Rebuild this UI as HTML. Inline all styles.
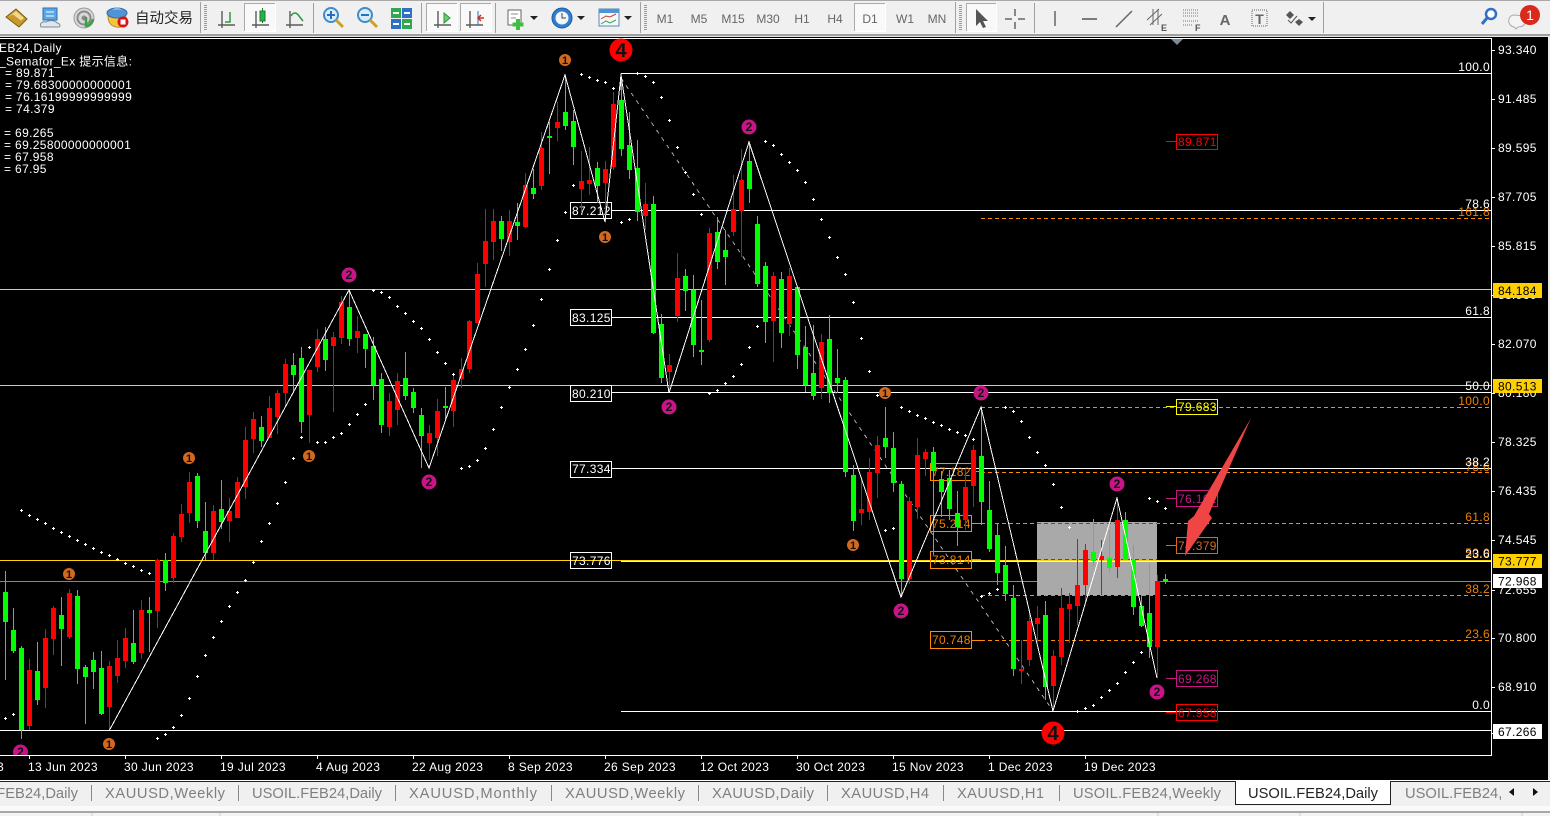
<!DOCTYPE html>
<html><head><meta charset="utf-8"><title>USOIL.FEB24,Daily</title>
<style>
html,body{margin:0;padding:0;background:#000;width:1550px;height:816px;overflow:hidden}
svg{display:block}
text{font-family:"Liberation Sans","Noto Sans CJK SC",sans-serif;font-size:12px;letter-spacing:.35px}
.tb{font-size:12px;fill:#666;text-anchor:middle;letter-spacing:0}
.t{font-size:14.7px;fill:#7f7f7f;letter-spacing:0}
.sg{font-size:11px;font-weight:bold;text-anchor:middle;fill:#111;letter-spacing:0}
</style></head><body>
<svg width="1550" height="816" viewBox="0 0 1550 816" xmlns="http://www.w3.org/2000/svg">
<defs>
<g id="ax" fill="none" stroke="#5a5a5a" stroke-width="1.4"><path d="M-8 7h17M-4-7v17"/></g>
<clipPath id="cl"><rect x="0" y="739" width="40" height="16"/></clipPath>
</defs>
<!-- toolbar -->
<rect width="1550" height="34" fill="#f0f0f0"/>
<rect width="1550" height="1" fill="#a8a8a8"/>
<rect y="34" width="1550" height="2" fill="#a0a0a0"/>
<rect y="36" width="1550" height="1" fill="#e8e8e8"/>
<g fill="#a0a0a0"><rect x="200" y="2" width="1" height="31"/><rect x="313" y="3" width="1" height="30"/><rect x="421" y="3" width="1" height="30"/><rect x="495" y="3" width="1" height="30"/><rect x="640" y="2" width="1" height="31"/><rect x="955" y="2" width="1" height="31"/><rect x="1034" y="3" width="1" height="30"/><rect x="1323" y="2" width="1" height="31"/></g>
<g stroke="#999" stroke-width="3" stroke-dasharray="1 1"><path d="M205.500 5V31M645.500 5V31M960.500 5V31"/></g>
<!-- selected boxes -->
<g fill="#f9f9f9" stroke="#fff"><rect x="244.500" y="3.500" width="31" height="28"/><rect x="426.500" y="3.500" width="31" height="28"/><rect x="460.500" y="3.500" width="31" height="28"/><rect x="854.500" y="3.500" width="31" height="28"/><rect x="966.500" y="3.500" width="30" height="28"/></g>
<g fill="none" stroke="#aaa"><path d="M244.500 31V3.500H275M426.500 31V3.500H457M460.500 31V3.500H491M854.500 31V3.500H885M966.500 31V3.500H996"/></g>
<!-- icon 1 folder -->
<path d="M6 17L16 9 27 19 19 27z" fill="#c9982a" stroke="#7a5c10"/><path d="M8.500 16.500l7.500-5.500 8 7-3 2.500-8-6z" fill="#f0d890"/>
<!-- icon 2 -->
<rect x="43" y="8" width="14" height="12" fill="#5aa7e6" stroke="#2a6fb5"/><path d="M46 12h8M46 16h8" stroke="#fff"/>
<path d="M41 27c-2-4 2-6 5-5 3-2 9-2 11 1 3 0 4 4 2 4z" fill="#dfe6ee" stroke="#7d8b99"/>
<!-- icon 3 -->
<circle cx="84" cy="18" r="10" fill="#d8d8d8" stroke="#999"/><circle cx="84" cy="18" r="6.500" fill="none" stroke="#8a8a8a" stroke-width="2"/><circle cx="84" cy="18" r="2.500" fill="#8a8a8a"/><path d="M86 17v9c3 0 6-3 7-7" fill="none" stroke="#3aa34a" stroke-width="2.500"/>
<!-- icon 4 -->
<path d="M108 16c0 9 6 12 13 11l6-8-3-5z" fill="#f5c63c" stroke="#b98b1a"/><ellipse cx="117" cy="13" rx="10" ry="5" fill="#4f94d4" stroke="#2d6aa5"/><path d="M112 10c2-3 8-3 10 0" fill="#7eb6e6"/>
<circle cx="123" cy="22" r="5.500" fill="#e01010"/><rect x="120.500" y="19.500" width="5" height="5" fill="#fff"/>
<text x="135" y="23" style="font-size:14.500px;fill:#222;letter-spacing:0">自动交易</text>
<!-- chart type icons -->
<use href="#ax" x="226" y="18"/><path d="M230 12v10h-5" fill="none" stroke="#2a9a3a" stroke-width="1.500"/>
<use href="#ax" x="260" y="18"/><path d="M262.500 8v15" stroke="#1f7a2e"/><rect x="260" y="11" width="5" height="10" fill="#22b14c" stroke="#1f7a2e"/>
<use href="#ax" x="294" y="18"/><path d="M291 16c3-5 6-3 8 0l4 5" fill="none" stroke="#2a9a3a" stroke-width="1.500"/>
<!-- zoom -->
<circle cx="331" cy="15" r="7" fill="#d9ecfa" stroke="#3f8ccc" stroke-width="2"/><path d="M336 20l7 7" stroke="#c9a227" stroke-width="3"/><path d="M327 15h8M331 11v8" stroke="#2a70b5" stroke-width="2"/>
<circle cx="365" cy="15" r="7" fill="#d9ecfa" stroke="#3f8ccc" stroke-width="2"/><path d="M370 20l7 7" stroke="#c9a227" stroke-width="3"/><path d="M361 15h8" stroke="#2a70b5" stroke-width="2"/>
<!-- tile -->
<rect x="391" y="8" width="10" height="10" fill="#2fa84f"/><rect x="402" y="8" width="10" height="10" fill="#2f6fc4"/><rect x="391" y="19" width="10" height="10" fill="#2f6fc4"/><rect x="402" y="19" width="10" height="10" fill="#2fa84f"/>
<path d="M393 13h6M404 13h6M393 24h6M404 24h6" stroke="#fff" stroke-width="2"/>
<use href="#ax" x="442" y="18"/><path d="M444 13l6 5-6 5z" fill="#6ecb6e" stroke="#2a9a3a"/>
<use href="#ax" x="474" y="18"/><path d="M478 11v14" stroke="#2a70b5"/><path d="M484 18h-5M481 15l-3 3 3 3" fill="none" stroke="#d03020" stroke-width="1.500"/>
<!-- new chart -->
<rect x="508" y="10" width="13" height="15" fill="#fff" stroke="#666"/><path d="M511 14h7M511 18h5" stroke="#888"/><path d="M518 19v11M512.500 24.500h11" stroke="#3fbf3f" stroke-width="4"/>
<path d="M530 16h8l-4 4z" fill="#222"/>
<circle cx="562" cy="18" r="10" fill="#2f7fd0" stroke="#1b5a9e"/><circle cx="562" cy="18" r="6.500" fill="#f2f6fa"/><path d="M562 13v5h4" fill="none" stroke="#444"/>
<path d="M577 16h8l-4 4z" fill="#222"/>
<rect x="599" y="9" width="20" height="17" fill="#f5f8fb" stroke="#5a88b5"/><rect x="599" y="9" width="20" height="4" fill="#4f94d4"/><path d="M601 19l5-3 4 1 6-3" fill="none" stroke="#b8402a"/><path d="M601 24l5-3 4 2 6-3" fill="none" stroke="#3aa34a"/>
<path d="M624 16h8l-4 4z" fill="#222"/>
<!-- timeframes -->
<text class="tb" x="665" y="23">M1</text><text class="tb" x="699" y="23">M5</text><text class="tb" x="733" y="23">M15</text><text class="tb" x="768" y="23">M30</text><text class="tb" x="802" y="23">H1</text><text class="tb" x="835" y="23">H4</text><text class="tb" x="870" y="23">D1</text><text class="tb" x="905" y="23">W1</text><text class="tb" x="937" y="23">MN</text>
<!-- tools -->
<path d="M976 9l0 17 4-4 3 6 3-1-3-6 5 0z" fill="#555"/>
<path d="M1005 19h7M1018 19h7M1015 9v7M1015 22v7" stroke="#666" stroke-width="1.500"/>
<path d="M1055 11v15" stroke="#666" stroke-width="1.500"/><path d="M1082 19h15" stroke="#555" stroke-width="1.500"/><path d="M1116 27l16-16" stroke="#666" stroke-width="1.500"/>
<path d="M1147 20l12-11M1150 25l12-11M1153 9v16M1158 9v16" stroke="#666" fill="none"/><text x="1161" y="31" style="font-size:9px;font-weight:bold;fill:#555;letter-spacing:0">E</text>
<path d="M1183 10h16M1183 13h16M1183 16h16M1183 21h16M1183 25h9" stroke="#777" stroke-dasharray="1 1"/><text x="1195" y="31" style="font-size:9px;font-weight:bold;fill:#555;letter-spacing:0">F</text>
<text x="1225" y="25" style="font-size:15px;font-weight:bold;fill:#666;text-anchor:middle;letter-spacing:0">A</text>
<rect x="1252" y="10" width="15" height="16" fill="none" stroke="#666" stroke-dasharray="1 1"/><text x="1259.500" y="24" style="font-size:14px;font-weight:bold;fill:#666;text-anchor:middle;letter-spacing:0">T</text>
<path d="M1290 11l4 4-4 4-4-4zM1299 19l4 3-4 4-4-4z" fill="#555"/><path d="M1288 20l3 3 6-7" fill="none" stroke="#555"/>
<path d="M1308 17h8l-4 4z" fill="#222"/>
<!-- search & chat -->
<circle cx="1491" cy="14" r="5" fill="#fff" stroke="#2f6fc4" stroke-width="2.500"/><path d="M1487 18l-5 6" stroke="#2f6fc4" stroke-width="3"/>
<path d="M1514 15c-6 0-8 10 0 12l2 2 2-2c7 0 10-6 6-11z" fill="#f4f4f4" stroke="#aaa"/>
<circle cx="1530" cy="15" r="10" fill="#d92a1c"/><text x="1530" y="20" style="font-size:14px;fill:#fff;text-anchor:middle;letter-spacing:0">1</text>

<!-- right margin -->
<rect x="1548" y="37" width="2" height="743" fill="#eee"/>

<!-- chart lines -->
<g shape-rendering="crispEdges" fill="none">
<path d="M1037 522h120v73h-120z" fill="#a9a9a9"/>
<path d="M0 581.500H1037M1157 581.500H1491" stroke="#7b8a99"/>
<path d="M0 289.500H1491M0 385.500H1491M0 560.500H1491" stroke="#ffd400"/>
<path d="M621 73.500H1491M621 73.500V90M611 210.500H1491M611 317.500H1491M611 392.500H1491M611 468.500H1491M621 561.500H1491M621 711.500H1491M0 730.500H1491" stroke="#fff"/>
<path d="M981 218.500H1491M981 407.500H1491M981 472.500H1491M981 523.500H1491M981 595.500H1491M981 640.500H1491" stroke="#ff8c00" stroke-dasharray="4 3"/>
<path d="M1037 523.500H1157M1037 559.500H1157" stroke="#5b3b9a" stroke-dasharray="4 3"/>
<path d="M972 471.500h9M972 523.500h9M972 559.500h9M972 640.500h9M981 472v-1" stroke="#ff8c00"/>
<path d="M1166 141.500h10" stroke="#f00"/><path d="M1166 406.500h10" stroke="#ff0"/><path d="M1166 498.500h10" stroke="#c71585"/><path d="M1166 545.500h10" stroke="#d2691e"/><path d="M1166 678.500h10" stroke="#c71585"/><path d="M1166 712.500h10" stroke="#f00"/>
<path d="M621 78L1053 711" stroke="#aaa" stroke-dasharray="4 5"/>
<!-- label boxes -->
<path d="M570.500 202.500h41v16h-41zM570.500 309.500h41v16h-41zM570.500 385.500h41v16h-41zM570.500 461.500h41v16h-41zM570.500 552.500h41v16h-41z" stroke="#fff"/>
<path d="M930.500 463.500h41v17h-41zM930.500 515.500h41v16h-41zM930.500 551.500h41v17h-41zM930.500 631.500h41v17h-41z" stroke="#ff8c00"/>
<path d="M1176.500 134.500h41v15h-41zM1176.500 704.500h41v16h-41z" stroke="#f00"/>
<path d="M1176.500 399.500h41v15h-41z" stroke="#ff0"/>
<path d="M1176.500 490.500h41v16h-41zM1176.500 670.500h41v16h-41z" stroke="#c71585"/>
<path d="M1176.500 537.500h41v16h-41z" stroke="#d2691e"/>
<path d="M0 38.500H1491.500V755.500H0" stroke="#fff"/>
<path d="M1491 50.500h4M1491 99.500h4M1491 148.500h4M1491 197.500h4M1491 246.500h4M1491 295.500h4M1491 344.500h4M1491 393.500h4M1491 442.500h4M1491 491.500h4M1491 540.500h4M1491 590.500h4M1491 638.500h4M1491 687.500h4M1491 733.500h4" stroke="#fff"/>
<path d="M29.500 755v4M125.500 755v4M221.500 755v4M317.500 755v4M413.500 755v4M509.500 755v4M605.500 755v4M701.500 755v4M797.500 755v4M893.500 755v4M989.500 755v4M1085.500 755v4" stroke="#fff"/>
</g>
<path d="M1171 39h12l-6 6z" fill="#7b8a99"/>
<!-- label text -->
<g fill="#fff">
<text x="572" y="215">87.212</text><text x="572" y="322">83.125</text><text x="572" y="398">80.210</text><text x="572" y="473">77.334</text><text x="572" y="565">73.776</text>
</g>
<g fill="#ee8000"><text x="932" y="476">77.182</text><text x="932" y="528">75.214</text><text x="932" y="564">73.814</text><text x="932" y="644">70.748</text></g>
<text x="1178" y="146" fill="#f00">89.871</text><text x="1178" y="411" fill="#ff0">79.683</text><text x="1178" y="503" fill="#c71585">76.161</text><text x="1178" y="550" fill="#d2691e">74.379</text><text x="1178" y="683" fill="#c71585">69.268</text><text x="1178" y="717" fill="#f00">67.958</text>
<!-- fib level text -->
<g fill="#ee8000" text-anchor="end"><text x="1490" y="216">161.8</text><text x="1490" y="405">100.0</text><text x="1490" y="471">78.6</text><text x="1490" y="521">61.8</text><text x="1490" y="557">50.0</text><text x="1490" y="593">38.2</text><text x="1490" y="638">23.6</text></g>
<g fill="#fff" text-anchor="end"><text x="1490" y="71">100.0</text><text x="1490" y="208">78.6</text><text x="1490" y="315">61.8</text><text x="1490" y="390">50.0</text><text x="1490" y="466">38.2</text><text x="1490" y="558">23.6</text><text x="1490" y="709">0.0</text></g>

<!-- candles -->
<g fill="none" shape-rendering="crispEdges">
<path stroke="#0f0" d="M5.500 571V680M13.500 608V653M21.500 646V739M37.500 642V705M61.500 597V666M77.500 590V684M85.500 665V724M93.500 652V689M101.500 651V715M133.500 610V664M149.500 597V652M165.500 553V591M197.500 473V528M205.500 502V560M221.500 480V529M261.500 416V447M293.500 353V393M301.500 347V433M325.500 327V371M349.500 290V346M365.500 334V368M373.500 337V400M381.500 373V433M405.500 352V400M413.500 388V413M421.500 408V468M445.500 387V420M501.500 216V251M517.500 203V240M533.500 169V199M549.500 122V174M565.500 75V130M573.500 110V165M597.500 162V203M621.500 78V156M629.500 112V179M637.500 140V221M653.500 196V334M661.500 314V383M685.500 269V311M693.500 275V357M701.500 300V365M717.500 217V269M725.500 230V285M749.500 143V203M757.500 216V287M765.500 262V343M781.500 272V348M797.500 287V369M805.500 326V392M813.500 325V400M829.500 315V403M837.500 349V393M845.500 377V477M853.500 465V531M885.500 407V458M893.500 432V492M901.500 481V597M933.500 447V555M941.500 471V517M949.500 470V520M957.500 491V546M981.500 408V525M989.500 481V552M997.500 523V585M1005.500 546V601M1013.500 585V676M1045.500 601V700M1093.500 519V566M1109.500 530V572M1125.500 512V560M1133.500 545V615M1141.500 595V627M1149.500 564V658M1165.500 574V584"/>
<path stroke="#f00" d="M29.500 659V730M45.500 629V708M53.500 606V655M69.500 589V639M109.500 661V730M117.500 640V683M125.500 628V668M141.500 600V659M157.500 559V628M173.500 533V583M181.500 504V542M189.500 472V523M213.500 505V560M229.500 498V542M237.500 477V499M245.500 427V499M253.500 412V453M269.500 396V438M277.500 390V434M285.500 359V407M309.500 370V443M317.500 329V372M333.500 332V412M341.500 296V344M357.500 316V353M389.500 393V436M397.500 373V425M429.500 425V460M437.500 399V456M453.500 375V427M461.500 358V388M469.500 320V373M477.500 263V323M485.500 209V287M493.500 209V260M509.500 210V256M525.500 173V228M541.500 132V190M557.500 102V141M581.500 151V213M589.500 147V195M605.500 161V223M613.500 92V170M645.500 183V230M669.500 354V390M677.500 253V322M709.500 228V342M733.500 175V236M741.500 149V257M773.500 272V362M789.500 268V336M821.500 334V399M861.500 477V525M869.500 458V520M877.500 436V498M909.500 497V584M917.500 438V519M925.500 449V476M965.500 470V530M973.500 445V507M1021.500 640V684M1029.500 612V666M1037.500 606V642M1053.500 650V710M1061.500 588V665M1069.500 593V643M1077.500 539V625M1085.500 544V603M1101.500 540V595M1117.500 500V578M1157.500 575V677"/>
<path stroke="#0f0" stroke-width="5" d="M5.500 592V622M13.500 630V651M21.500 648V730M37.500 671V700M61.500 615V629M77.500 596V669M85.500 667V677M93.500 660V672M101.500 668V714M133.500 643V662M149.500 610V613M165.500 560V583M197.500 476V521M205.500 531V553M221.500 509V522M261.500 427V441M293.500 365V375M301.500 358V422M325.500 339V360M349.500 307V339M365.500 334V349M373.500 346V385M381.500 379V425M405.500 378V396M413.500 392V408M421.500 415V436M445.500 406V408M501.500 221V239M517.500 222V226M533.500 188V194M549.500 136V138M565.500 112V126M573.500 121V147M597.500 168V186M621.500 100V149M629.500 145V170M637.500 168V212M653.500 204V333M661.500 324V378M685.500 276V291M693.500 290V345M701.500 350V352M717.500 232V262M725.500 250V257M749.500 161V189M757.500 224V284M765.500 266V322M781.500 279V333M797.500 287V355M805.500 347V385M813.500 373V396M829.500 339V393M837.500 378V383M845.500 380V472M853.500 475V521M885.500 438V447M893.500 448V483M901.500 484V579M933.500 452V471M941.500 479V492M949.500 478V509M957.500 513V527M981.500 456V502M989.500 510V549M997.500 535V573M1005.500 565V594M1013.500 598V669M1045.500 615V687M1093.500 552V561M1109.500 558V568M1125.500 520V560M1133.500 560V607M1141.500 606V626M1149.500 613V647M1165.500 579V582"/>
<path stroke="#f00" stroke-width="5" d="M29.500 670V726M45.500 638V688M53.500 608V639M69.500 593V637M109.500 666V707M117.500 658V676M125.500 638V661M141.500 610V653M157.500 560V611M173.500 536V578M181.500 514V537M189.500 482V513M213.500 511V553M229.500 511V521M237.500 482V518M245.500 440V487M253.500 419V439M269.500 408V438M277.500 393V417M285.500 364V393M309.500 370V415M317.500 339V367M333.500 337V346M341.500 302V338M357.500 331V338M389.500 401V427M397.500 381V410M429.500 433V443M437.500 411V438M453.500 380V411M461.500 369V379M469.500 321V369M477.500 274V323M485.500 241V264M493.500 221V242M509.500 221V242M525.500 185V227M541.500 148V186M557.500 122V128M581.500 181V189M589.500 180V184M605.500 169V183M613.500 104V167M645.500 204V216M669.500 365V372M677.500 278V316M709.500 233V340M733.500 209V232M741.500 180V211M773.500 276V321M789.500 276V324M821.500 342V388M861.500 509V513M869.500 472V512M877.500 445V473M909.500 501V579M917.500 455V507M925.500 452V459M965.500 487V520M973.500 450V486M1021.500 669V671M1029.500 621V660M1037.500 618V624M1053.500 656V686M1061.500 608V657M1069.500 604V609M1077.500 585V606M1085.500 550V585M1101.500 556V560M1117.500 520V567M1157.500 581V647"/>
<!-- zigzag -->
<path stroke="#fff" d="M109 731L349 290 429 468 565 75 605 222 621 75 669 393 749 142 901 597 981 407 1053 711 1117 498 1157 678"/>
<!-- dots -->
<path stroke="#fff" d="M4 718.500h3m-1.500-1.500v3M12 714.500h3m-1.500-1.500v3M20 510.500h3m-1.500-1.500v3M28 515.500h3m-1.500-1.500v3M36 519.500h3m-1.500-1.500v3M44 523.500h3m-1.500-1.500v3M52 528.500h3m-1.500-1.500v3M60 532.500h3m-1.500-1.500v3M68 536.500h3m-1.500-1.500v3M76 540.500h3m-1.500-1.500v3M84 544.500h3m-1.500-1.500v3M92 548.500h3m-1.500-1.500v3M100 552.500h3m-1.500-1.500v3M108 555.500h3m-1.500-1.500v3M116 559.500h3m-1.500-1.500v3M124 563.500h3m-1.500-1.500v3M132 566.500h3m-1.500-1.500v3M140 570.500h3m-1.500-1.500v3M148 573.500h3m-1.500-1.500v3M156 738.500h3m-1.500-1.500v3M164 734.500h3m-1.500-1.500v3M172 727.500h3m-1.500-1.500v3M180 715.500h3m-1.500-1.500v3M188 698.500h3m-1.500-1.500v3M196 676.500h3m-1.500-1.500v3M204 655.500h3m-1.500-1.500v3M212 637.500h3m-1.500-1.500v3M220 621.500h3m-1.500-1.500v3M228 606.500h3m-1.500-1.500v3M236 592.500h3m-1.500-1.500v3M244 580.500h3m-1.500-1.500v3M252 562.500h3m-1.500-1.500v3M260 541.500h3m-1.500-1.500v3M268 523.500h3m-1.500-1.500v3M276 503.500h3m-1.500-1.500v3M284 482.500h3m-1.500-1.500v3M292 458.500h3m-1.500-1.500v3M300 437.500h3m-1.500-1.500v3M308 347.500h3m-1.500-1.500v3M316 442.500h3m-1.500-1.500v3M324 442.500h3m-1.500-1.500v3M332 437.500h3m-1.500-1.500v3M340 433.500h3m-1.500-1.500v3M348 424.500h3m-1.500-1.500v3M356 414.500h3m-1.500-1.500v3M364 404.500h3m-1.500-1.500v3M372 290.500h3m-1.500-1.500v3M380 292.500h3m-1.500-1.500v3M388 297.500h3m-1.500-1.500v3M396 306.500h3m-1.500-1.500v3M404 313.500h3m-1.500-1.500v3M412 321.500h3m-1.500-1.500v3M420 328.500h3m-1.500-1.500v3M428 339.500h3m-1.500-1.500v3M436 352.500h3m-1.500-1.500v3M444 363.500h3m-1.500-1.500v3M452 374.500h3m-1.500-1.500v3M460 468.500h3m-1.500-1.500v3M468 466.500h3m-1.500-1.500v3M476 460.500h3m-1.500-1.500v3M484 448.500h3m-1.500-1.500v3M492 429.500h3m-1.500-1.500v3M500 407.500h3m-1.500-1.500v3M508 387.500h3m-1.500-1.500v3M516 369.500h3m-1.500-1.500v3M524 349.500h3m-1.500-1.500v3M532 325.500h3m-1.500-1.500v3M540 299.500h3m-1.500-1.500v3M548 269.500h3m-1.500-1.500v3M556 240.500h3m-1.500-1.500v3M564 212.500h3m-1.500-1.500v3M572 185.500h3m-1.500-1.500v3M580 74.500h3m-1.500-1.500v3M588 77.500h3m-1.500-1.500v3M596 80.500h3m-1.500-1.500v3M604 82.500h3m-1.500-1.500v3M612 88.500h3m-1.500-1.500v3M620 222.500h3m-1.500-1.500v3M628 219.500h3m-1.500-1.500v3M636 73.500h3m-1.500-1.500v3M644 76.500h3m-1.500-1.500v3M652 82.500h3m-1.500-1.500v3M660 97.500h3m-1.500-1.500v3M668 120.500h3m-1.500-1.500v3M676 147.500h3m-1.500-1.500v3M684 172.500h3m-1.500-1.500v3M692 194.500h3m-1.500-1.500v3M700 214.500h3m-1.500-1.500v3M708 393.500h3m-1.500-1.500v3M716 390.500h3m-1.500-1.500v3M724 383.500h3m-1.500-1.500v3M732 376.500h3m-1.500-1.500v3M740 364.500h3m-1.500-1.500v3M748 347.500h3m-1.500-1.500v3M756 326.500h3m-1.500-1.500v3M764 141.500h3m-1.500-1.500v3M772 145.500h3m-1.500-1.500v3M780 154.500h3m-1.500-1.500v3M788 162.500h3m-1.500-1.500v3M796 170.500h3m-1.500-1.500v3M804 182.500h3m-1.500-1.500v3M812 199.500h3m-1.500-1.500v3M820 219.500h3m-1.500-1.500v3M828 237.500h3m-1.500-1.500v3M836 257.500h3m-1.500-1.500v3M844 274.500h3m-1.500-1.500v3M852 302.500h3m-1.500-1.500v3M860 338.500h3m-1.500-1.500v3M868 371.500h3m-1.500-1.500v3M876 395.500h3m-1.500-1.500v3M884 530.500h3m-1.500-1.500v3M892 528.500h3m-1.500-1.500v3M900 407.500h3m-1.500-1.500v3M908 411.500h3m-1.500-1.500v3M916 415.500h3m-1.500-1.500v3M924 418.500h3m-1.500-1.500v3M932 422.500h3m-1.500-1.500v3M940 425.500h3m-1.500-1.500v3M948 429.500h3m-1.500-1.500v3M956 432.500h3m-1.500-1.500v3M964 435.500h3m-1.500-1.500v3M972 439.500h3m-1.500-1.500v3M980 596.500h3m-1.500-1.500v3M988 593.500h3m-1.500-1.500v3M996 589.500h3m-1.500-1.500v3M1004 407.500h3m-1.500-1.500v3M1012 411.500h3m-1.500-1.500v3M1020 421.500h3m-1.500-1.500v3M1028 437.500h3m-1.500-1.500v3M1036 452.500h3m-1.500-1.500v3M1044 465.500h3m-1.500-1.500v3M1052 484.500h3m-1.500-1.500v3M1060 507.500h3m-1.500-1.500v3M1068 527.500h3m-1.500-1.500v3M1076 711.500h3m-1.500-1.500v3M1084 708.500h3m-1.500-1.500v3M1092 705.500h3m-1.500-1.500v3M1100 697.500h3m-1.500-1.500v3M1108 690.500h3m-1.500-1.500v3M1116 683.500h3m-1.500-1.500v3M1124 672.500h3m-1.500-1.500v3M1132 662.500h3m-1.500-1.500v3M1140 652.500h3m-1.500-1.500v3M1148 498.500h3m-1.500-1.500v3M1156 501.500h3m-1.500-1.500v3M1164 508.500h3m-1.500-1.500v3"/>
</g>
<!-- semafor signals -->
<g fill="#d2691e"><circle cx="69" cy="574" r="6"/><circle cx="189" cy="458" r="6"/><circle cx="109" cy="744" r="6"/><circle cx="309" cy="456" r="6"/><circle cx="565" cy="60" r="6"/><circle cx="605" cy="237" r="6"/><circle cx="853" cy="545" r="6"/><circle cx="885" cy="393" r="6"/></g>
<text class="sg" x="69" y="578">1</text><text class="sg" x="189" y="462">1</text><text class="sg" x="109" y="748">1</text><text class="sg" x="309" y="460">1</text><text class="sg" x="565" y="64">1</text><text class="sg" x="605" y="241">1</text><text class="sg" x="853" y="549">1</text><text class="sg" x="885" y="397">1</text>
<g fill="#c71585"><circle cx="349" cy="275" r="7.500"/><circle cx="429" cy="482" r="7.500"/><circle cx="669" cy="407" r="7.500"/><circle cx="749" cy="127" r="7.500"/><circle cx="981" cy="393" r="7.500"/><circle cx="901" cy="611" r="7.500"/><circle cx="1117" cy="484" r="7.500"/><circle cx="1157" cy="692" r="7.500"/></g>
<text class="sg" x="349" y="279" style="font-size:12px">2</text><text class="sg" x="429" y="486" style="font-size:12px">2</text><text class="sg" x="669" y="411" style="font-size:12px">2</text><text class="sg" x="749" y="131" style="font-size:12px">2</text><text class="sg" x="981" y="397" style="font-size:12px">2</text><text class="sg" x="901" y="615" style="font-size:12px">2</text><text class="sg" x="1117" y="488" style="font-size:12px">2</text><text class="sg" x="1157" y="696" style="font-size:12px">2</text>
<g fill="#f00"><circle cx="621" cy="50" r="11.500"/><circle cx="1053" cy="733" r="11.500"/></g>
<text x="621" y="57" style="font-size:20px;font-weight:bold;fill:#111;text-anchor:middle;letter-spacing:0">4</text><text x="1053" y="740" style="font-size:20px;font-weight:bold;fill:#111;text-anchor:middle;letter-spacing:0">4</text>
<!-- clipped 2 -->
<g clip-path="url(#cl)"><circle cx="20.500" cy="752" r="7.500" fill="#c71585"/><text class="sg" x="20.500" y="756" style="font-size:12px">2</text></g>
<!-- red arrow -->
<path d="M1251 418L1209 514 1212 518 1185 556 1188 521 1194 516z" fill="#f04545"/>
<!-- top-left text -->
<g fill="#fff">
<text x="-1" y="52">EB24,Daily</text><text x="-1" y="65.500">_Semafor_Ex 提示信息:</text><text x="5" y="77">= 89.871</text><text x="5" y="89">= 79.68300000000001</text><text x="5" y="101">= 76.16199999999999</text><text x="5" y="113">= 74.379</text><text x="4" y="137">= 69.265</text><text x="4" y="149">= 69.25800000000001</text><text x="4" y="161">= 67.958</text><text x="4" y="173">= 67.95</text>
</g>
<!-- axis -->
<g fill="#fff"><text x="1498" y="54">93.340</text><text x="1498" y="103">91.485</text><text x="1498" y="152">89.595</text><text x="1498" y="201">87.705</text><text x="1498" y="250">85.815</text><text x="1498" y="299">83.960</text><text x="1498" y="348">82.070</text><text x="1498" y="397">80.180</text><text x="1498" y="446">78.325</text><text x="1498" y="495">76.435</text><text x="1498" y="544">74.545</text><text x="1498" y="594">72.655</text><text x="1498" y="642">70.800</text><text x="1498" y="691">68.910</text><text x="1498" y="737">67.020</text></g>
<rect x="1493" y="283" width="49" height="15" fill="#ffd000"/><rect x="1493" y="379" width="49" height="14" fill="#ffd000"/><rect x="1493" y="554" width="49" height="14" fill="#ffd000"/><rect x="1493" y="574" width="49" height="14" fill="#fff"/><rect x="1493" y="724" width="49" height="15" fill="#fff"/>
<g fill="#000"><text x="1498" y="295">84.184</text><text x="1498" y="390.500">80.513</text><text x="1498" y="565.500">73.777</text><text x="1498" y="585.500">72.968</text><text x="1498" y="736">67.266</text></g>
<!-- time axis -->
<g fill="#fff"><text x="-3" y="771">3</text><text x="28" y="771">13 Jun 2023</text><text x="124" y="771">30 Jun 2023</text><text x="220" y="771">19 Jul 2023</text><text x="316" y="771">4 Aug 2023</text><text x="412" y="771">22 Aug 2023</text><text x="508" y="771">8 Sep 2023</text><text x="604" y="771">26 Sep 2023</text><text x="700" y="771">12 Oct 2023</text><text x="796" y="771">30 Oct 2023</text><text x="892" y="771">15 Nov 2023</text><text x="988" y="771">1 Dec 2023</text><text x="1084" y="771">19 Dec 2023</text></g>
<!-- tab bar -->
<rect y="780" width="1550" height="36" fill="#f0f0f0"/>
<rect y="780" width="1550" height="1" fill="#fff"/><rect y="781" width="1550" height="1" fill="#222"/>
<rect y="806" width="1550" height="5" fill="#fafafa"/><rect y="811" width="1550" height="2" fill="#a8a8a8"/>
<rect y="813" width="1550" height="3" fill="#f4f4f4"/>
<path d="M92 813v3M220 813v3M1158 813v3M1300 813v3M1522 813v3" stroke="#ccc"/>
<g fill="#888"><rect x="91" y="785" width="1" height="16"/><rect x="238" y="785" width="1" height="16"/><rect x="395" y="785" width="1" height="16"/><rect x="551" y="785" width="1" height="16"/><rect x="698" y="785" width="1" height="16"/><rect x="827" y="785" width="1" height="16"/><rect x="943" y="785" width="1" height="16"/><rect x="1059" y="785" width="1" height="16"/></g>
<text class="t" x="-52" y="798" textLength="130">USOIL.FEB24,Daily</text><text class="t" x="105" y="798" textLength="120">XAUUSD,Weekly</text><text class="t" x="252" y="798" textLength="130">USOIL.FEB24,Daily</text><text class="t" x="409" y="798" textLength="128">XAUUSD,Monthly</text><text class="t" x="565" y="798" textLength="120">XAUUSD,Weekly</text><text class="t" x="712" y="798" textLength="102">XAUUSD,Daily</text><text class="t" x="841" y="798" textLength="88">XAUUSD,H4</text><text class="t" x="957" y="798" textLength="87">XAUUSD,H1</text><text class="t" x="1073" y="798" textLength="148">USOIL.FEB24,Weekly</text>
<path d="M1235.500 782V804.500H1390.500V782" fill="#fff" stroke="#222" shape-rendering="crispEdges"/>
<rect x="1236" y="780" width="154" height="3" fill="#fff"/>
<text class="t" x="1248" y="798" textLength="130" style="fill:#222">USOIL.FEB24,Daily</text>
<svg x="0" y="780" width="1501" height="30"><text class="t" x="1405" y="18" textLength="130">USOIL.FEB24,Daily</text></svg>
<rect x="1501" y="782" width="49" height="24" fill="#f0f0f0"/>
<path d="M1514 788v8l-5-4zM1533 788v8l5-4z" fill="#111"/>
</svg>
</body></html>
